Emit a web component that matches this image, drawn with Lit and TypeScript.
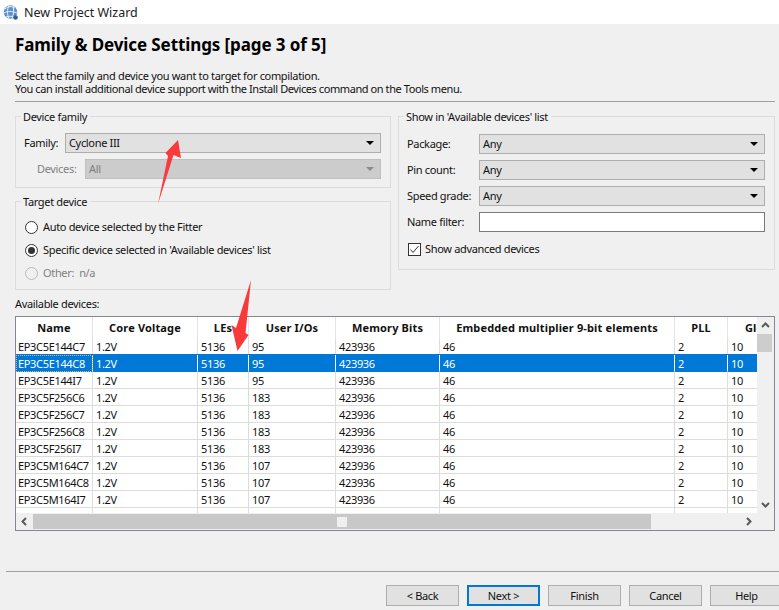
import { LitElement, html, css, svg } from "lit";
import { customElement } from "lit/decorators.js";

const COLS = [
  { t: "Name", w: 77 },
  { t: "Core Voltage", w: 105 },
  { t: "LEs", w: 51 },
  { t: "User I/Os", w: 87 },
  { t: "Memory Bits", w: 104 },
  { t: "Embedded multiplier 9-bit elements", w: 235 },
  { t: "PLL", w: 53 },
  { t: "Global Clocks", w: 110 },
];
const DEVS: [string, string][] = [
  ["EP3C5E144C7", "95"], ["EP3C5E144C8", "95"], ["EP3C5E144I7", "95"],
  ["EP3C5F256C6", "183"], ["EP3C5F256C7", "183"], ["EP3C5F256C8", "183"], ["EP3C5F256I7", "183"],
  ["EP3C5M164C7", "107"], ["EP3C5M164C8", "107"], ["EP3C5M164I7", "107"],
];

@customElement("app-root")
export class AppRoot extends LitElement {
  static styles = css`
    :host { display: block; position: relative; width: 779px; height: 610px; overflow: hidden; background: #f0f0f0;
      font-family: "Noto Sans", "Open Sans", sans-serif; font-size: 11px; letter-spacing: -0.33px; color: #111; }
    * { box-sizing: border-box; }
    .titlebar { height: 24px; background: #fff; display: flex; align-items: center; gap: 5px; padding: 0 0 0 3px; font-size: 12.5px; letter-spacing: 0; color: #222; }
    .titlebar svg { display: block; }
    .content { padding: 0 4px 0 15px; }
    h1 { margin: 0; height: 42px; padding-top: 10px; font: bold 17px/22px "Noto Sans", sans-serif; letter-spacing: -0.1px; color: #000; }
    .desc { margin-top: 3px; height: 33px; line-height: 13px; border-bottom: 1px solid #a0a0a0; white-space: nowrap; }
    .desc div:last-child { letter-spacing: -0.42px; }
    .groups { display: grid; grid-template-columns: 376px 377px; gap: 7px; margin-top: 14px; }
    .col { display: flex; flex-direction: column; gap: 13px; }
    .group { position: relative; border: 1px solid #dcdcdc; }
    .legend { position: absolute; top: -8px; left: 5px; padding: 0 3px 0 2px; background: #f0f0f0; line-height: 15px; }
    .fam { height: 72px; padding: 16px 9px 0 8px; display: flex; flex-direction: column; gap: 6px; }
    .line { display: flex; align-items: center; }
    .line > span, .combo > span, .radio > span, .check > span { padding-bottom: 2px; }
    .combo { flex: 1; height: 20px; border: 1px solid #adadad; background: #e1e1e1; display: flex; align-items: center; justify-content: space-between; padding: 0 6px 0 3px; }
    .combo.off { background: #cccccc; border-color: #bfbfbf; color: #808080; }
    .tri { width: 0; height: 0; border-left: 4px solid transparent; border-right: 4px solid transparent; border-top: 4px solid #000; }
    .off .tri { border-top-color: #8a8a8a; }
    .lab1 { width: 41px; }
    .lab2 { width: 61px; padding-left: 13px; color: #808080; }
    .target { height: 89px; padding: 17px 0 0 9px; display: flex; flex-direction: column; gap: 7px; }
    .radio { display: flex; align-items: center; gap: 5px; height: 16px; }
    .radio i { width: 13px; height: 13px; border-radius: 50%; border: 1px solid #333; background: #fff; display: flex; align-items: center; justify-content: center; }
    .radio b { width: 7px; height: 7px; border-radius: 50%; background: #333; }
    .radio.off { color: #808080; }
    .radio.off i { border-color: #bbb; background: #f0f0f0; }
    .show { height: 154px; padding: 17px 9px 0 8px; display: flex; flex-direction: column; gap: 6px; }
    .lab3 { width: 72px; white-space: nowrap; }
    .input { flex: 1; height: 20px; border: 1px solid #7a7a7a; background: #fff; }
    .check { display: flex; align-items: center; gap: 4px; margin-top: 3px; margin-left: 1px; }
    .check svg { display: block; }
    .avail { margin-top: 6px; height: 20px; line-height: 16px; }
    .table { width: 760px; height: 215px; border: 1px solid #828790; background: #f0f0f0; display: grid; grid-template-columns: 741px 17px; grid-template-rows: 196px 17px; }
    .grid { background: #fff; overflow: hidden; }
    .tr { display: flex; height: 17px; width: 800px; }
    .tr.sel { background: #0078d7; color: #fff; box-shadow: 0 -1px 0 #0078d7; position: relative; }
    .th { height: 21px; font-weight: 700; display: flex; width: 800px; letter-spacing: 0.15px; }
    .th span { border-right: 1px solid #e4e4e4; text-align: center; line-height: 21px; white-space: nowrap; overflow: hidden; flex: none; }
    .tr span { flex: none; border-right: 1px solid #dcdcdc; border-bottom: 1px solid #dcdcdc; padding-left: 3px; line-height: 17px; white-space: nowrap; overflow: hidden; }
    .tr span:first-child { padding-left: 2px; }
    .tr.sel span { border-bottom-color: #0078d7; border-right-color: #fff; }
    .tr.sel span:first-child { outline: 1px dotted #e8b070; outline-offset: -1px; }
    .vs { display: flex; flex-direction: column; align-items: center; padding: 3px 0; }
    .arrow { display: block; flex: none; }
    .vs .thumb { width: 15px; height: 18px; background: #cdcdcd; margin: 3px auto 0 0; }
    .vs .sp { flex: 1; }
    .hs { display: flex; align-items: center; grid-column: 1; }
    .hs .btn { width: 17px; height: 16px; display: flex; align-items: center; justify-content: center; flex: none; }
    .hs .bar { width: 618px; height: 15px; background: #c8c8c8; display: flex; align-items: center; justify-content: center; }
    .hs .grip { width: 10px; height: 10px; background: #f0f0f0; }
    .hs .rest { flex: 1; }
    .foot { position: absolute; left: 6px; right: 0; top: 571px; height: 1px; background: #a0a0a0; }
    .buttons { position: absolute; left: 386px; top: 585px; display: flex; gap: 8px; }
    .buttons button { width: 73px; height: 21px; font: inherit; letter-spacing: inherit; color: #111; background: #e1e1e1; border: 1px solid #adadad; padding: 0; flex: none; }
    .buttons button.def { border: 2px solid #0078d7; }
    .overlay { position: absolute; left: 0; top: 0; pointer-events: none; }
  `;

  private caret(d: string) {
    return html`<svg class="arrow" width="11" height="11" viewBox="0 0 11 11"><path d=${d} fill="none" stroke="#5a5a5a" stroke-width="2"/></svg>`;
  }

  render() {
    const cw = COLS.map((c) => c.w);
    return html`
      <div class="titlebar">
        <svg width="16" height="17" viewBox="0 0 16 17">
          <circle cx="7.500" cy="8" r="6.800" fill="#5f93c8"/>
          <path d="M2 5c3-3 7-3 10-1M1 9c3-2 8-2 13 0M3 13c3-1 6-1 8 0M6 1.500c-2 4-2 9 0 13M10 2c1 4 1 8-1 12" fill="none" stroke="#e4eef8" stroke-width="1"/>
          <circle cx="12.500" cy="13.500" r="2.300" fill="#2a5f9a"/>
        </svg>
        <span>New Project Wizard</span>
      </div>
      <div class="content">
        <h1>Family &amp; Device Settings [page 3 of 5]</h1>
        <div class="desc"><div>Select the family and device you want to target for compilation.</div><div>You can install additional device support with the Install Devices command on the Tools menu.</div></div>
        <div class="groups">
          <div class="col">
            <div class="group fam">
              <div class="legend">Device family</div>
              <div class="line"><span class="lab1">Family:</span><div class="combo"><span>Cyclone III</span><div class="tri"></div></div></div>
              <div class="line"><span class="lab2">Devices:</span><div class="combo off"><span>All</span><div class="tri"></div></div></div>
            </div>
            <div class="group target">
              <div class="legend">Target device</div>
              <div class="radio"><i></i><span>Auto device selected by the Fitter</span></div>
              <div class="radio"><i><b></b></i><span>Specific device selected in 'Available devices' list</span></div>
              <div class="radio off"><i></i><span>Other:&nbsp; n/a</span></div>
            </div>
          </div>
          <div class="group show">
            <div class="legend">Show in 'Available devices' list</div>
            ${["Package:", "Pin count:", "Speed grade:"].map((l) => html`
              <div class="line"><span class="lab3">${l}</span><div class="combo"><span>Any</span><div class="tri"></div></div></div>`)}
            <div class="line"><span class="lab3">Name filter:</span><div class="input"></div></div>
            <div class="check">
              <svg width="13" height="13" viewBox="0 0 13 13"><rect x=".5" y=".5" width="12" height="12" fill="#fff" stroke="#333"/><path d="M2.500 6.500 5 9.500 10.500 3" fill="none" stroke="#333" stroke-width="1"/></svg>
              <span>Show advanced devices</span>
            </div>
          </div>
        </div>
        <div class="avail">Available devices:</div>
        <div class="table">
          <div class="grid">
            <div class="th">${COLS.map((c) => html`<span style="width:${c.w}px">${c.t}</span>`)}</div>
            ${DEVS.map(([n, io], i) => {
              const vals = [n, "1.2V", "5136", io, "423936", "46", "2", "10"];
              return html`<div class="tr ${i === 1 ? "sel" : ""}">${vals.map((v, j) => html`<span style="width:${cw[j]}px">${v}</span>`)}</div>`;
            })}
            <div class="tr">${cw.map((w) => html`<span style="width:${w}px;border-bottom:0">&nbsp;</span>`)}</div>
          </div>
          <div class="vs">
            ${this.caret("M2 7 5.500 3.500 9 7")}
            <div class="thumb"></div>
            <div class="sp"></div>
            ${this.caret("M2 4 5.500 7.500 9 4")}
          </div>
          <div class="hs">
            <div class="btn">${this.caret("M7 2 3.500 5.500 7 9")}</div>
            <div class="bar"><div class="grip"></div></div>
            <div class="rest"></div>
            <div class="btn">${this.caret("M4 2 7.500 5.500 4 9")}</div>
          </div>
        </div>
      </div>
      <div class="foot"></div>
      <div class="buttons">
        <button>&lt; Back</button><button class="def">Next &gt;</button><button>Finish</button><button>Cancel</button><button>Help</button>
      </div>
      <svg class="overlay" width="779" height="610" viewBox="0 0 779 610">
        ${svg`<path d="M178 140 181 158 173.500 155 158 204 168 156 165.500 153Z" fill="#fa3a3a"/>`}
        ${svg`<path d="M251 280 245.500 333 248.500 335 237.500 351 231.500 325 236 328Z" fill="#fa3a3a"/>`}
      </svg>
    `;
  }
}
